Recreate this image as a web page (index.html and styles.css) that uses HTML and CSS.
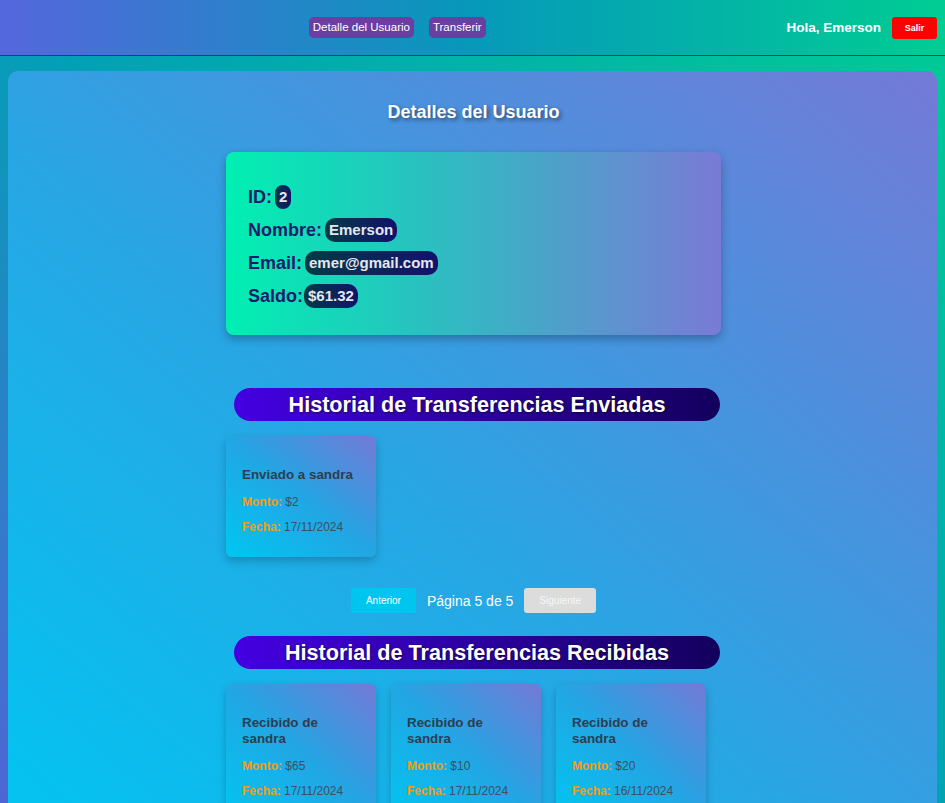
FILE: index.html
```html
<!DOCTYPE html>
<html lang="es">
<head>
<meta charset="utf-8">
<title>Detalles del Usuario</title>
<link rel="stylesheet" href="styles.css">
</head>
<body>
<header class="topbar">
  <div class="brand"></div>
  <nav class="nav">
    <a class="nav-link" href="#">Detalle del Usuario</a>
    <a class="nav-link" href="#">Transferir</a>
  </nav>
  <div class="user">
    <span class="greeting">Hola, Emerson</span>
    <button class="logout">Salir</button>
  </div>
</header>

<main class="panel">
  <h2 class="page-title">Detalles del Usuario</h2>
  <section class="content">
    <div class="user-card">
      <p class="row"><strong class="label">ID:</strong><span class="pill">2</span></p>
      <p class="row"><strong class="label">Nombre:</strong><span class="pill">Emerson</span></p>
      <p class="row"><strong class="label">Email:</strong><span class="pill">emer@gmail.com</span></p>
      <p class="row"><strong class="label tight">Saldo:</strong><span class="pill">$61.32</span></p>
    </div>

    <h2 class="section-title first">Historial de Transferencias Enviadas</h2>
    <div class="grid">
      <div class="tcard">
        <h3 class="tcard-title">Enviado a sandra</h3>
        <p class="tline"><strong class="key">Monto:</strong> $2</p>
        <p class="tline"><strong class="key">Fecha:</strong> 17/11/2024</p>
      </div>
    </div>

    <div class="pager">
      <button class="pbtn active">Anterior</button>
      <span class="pinfo">Página 5 de 5</span>
      <button class="pbtn disabled">Siguiente</button>
    </div>

    <h2 class="section-title">Historial de Transferencias Recibidas</h2>
    <div class="grid">
      <div class="tcard">
        <h3 class="tcard-title">Recibido de sandra</h3>
        <p class="tline"><strong class="key">Monto:</strong> $65</p>
        <p class="tline"><strong class="key">Fecha:</strong> 17/11/2024</p>
      </div>
      <div class="tcard">
        <h3 class="tcard-title">Recibido de sandra</h3>
        <p class="tline"><strong class="key">Monto:</strong> $10</p>
        <p class="tline"><strong class="key">Fecha:</strong> 17/11/2024</p>
      </div>
      <div class="tcard">
        <h3 class="tcard-title">Recibido de sandra</h3>
        <p class="tline"><strong class="key">Monto:</strong> $20</p>
        <p class="tline"><strong class="key">Fecha:</strong> 16/11/2024</p>
      </div>
    </div>
  </section>
</main>
</body>
</html>
```

FILE: styles.css
```css
* { box-sizing: border-box; }

html, body { margin: 0; padding: 0; }

body {
  font-family: "Liberation Sans", Arial, Helvetica, sans-serif;
  background: linear-gradient(to top right, #5660d8 0%, #02a0b6 50%, #00cc94 100%);
  min-height: 100vh;
  padding-bottom: 20px;
}

/* Header */
.topbar {
  height: 56px;
  padding: 0 8px;
  display: flex;
  align-items: center;
  justify-content: space-between;
  background: linear-gradient(to right, #5567dd 0%, #0699ba 50%, #00cd93 100%);
  border-bottom: 1px solid #24434e;
}

.brand { width: 0; }

.nav {
  display: flex;
  gap: 15px;
}

.nav-link {
  display: block;
  height: 21px;
  line-height: 21px;
  padding: 0 4px;
  background: #6a3fa2;
  color: #fff;
  border-radius: 5px;
  font-size: 11.5px;
  text-decoration: none;
}

.user {
  display: flex;
  align-items: center;
  gap: 11px;
}

.greeting {
  color: #fff;
  font-weight: bold;
  font-size: 13.5px;
}

.logout {
  width: 45px;
  height: 22px;
  border: none;
  border-radius: 3px;
  background: #ff0000;
  color: #fff;
  font-family: inherit;
  font-weight: bold;
  font-size: 9px;
  padding: 0;
}

/* Panel */
.panel {
  margin: 15px 8px 0;
  padding: 30px 0 40px 2px;
  border-radius: 10px;
  background: linear-gradient(to top right, #00c6f2 0%, #28a6e4 45%, #7479d6 100%);
}

.page-title {
  margin: 0;
  text-align: center;
  color: #fff;
  font-size: 18px;
  line-height: 22px;
  text-shadow: 2px 2px 4px rgba(0, 0, 0, 0.5);
}

.content {
  width: 495px;
  margin: 29px auto 0;
}

.user-card {
  height: 183px;
  padding: 33px 22px 0;
  display: flex;
  flex-direction: column;
  gap: 9px;
  border-radius: 8px;
  background: linear-gradient(to right, #00f0b2 0%, #2ac0c0 40%, #7a7ad6 100%);
  box-shadow: 0 4px 10px rgba(0, 0, 0, 0.28);
}

.row {
  margin: 0;
  height: 24px;
  display: flex;
  align-items: center;
}

.label {
  color: #1b1a6c;
  font-size: 18px;
  margin-right: 3px;
}

.label.tight { margin-right: 1px; }

.pill {
  height: 24px;
  line-height: 24px;
  padding: 0 4px;
  border-radius: 10px;
  background: linear-gradient(to right, #033a46, #12126c);
  color: #e6e6ee;
  font-weight: bold;
  font-size: 15px;
}

.section-title {
  margin: 53px 1px 0 8px;
  height: 33px;
  line-height: 33px;
  border-radius: 17px;
  background: linear-gradient(to right, #4400e2 0%, #2a0099 55%, #13005c 100%);
  color: #fff;
  text-align: center;
  font-size: 21.6px;
  text-shadow: 1px 1px 3px rgba(0, 0, 0, 0.5);
}

.section-title:not(.first) { margin-top: 23px; }

.grid {
  margin-top: 15px;
  display: grid;
  grid-template-columns: repeat(3, 150px);
  gap: 15px;
}

.tcard {
  padding: 31px 16px 23px;
  border-radius: 6px;
  background: linear-gradient(to top right, #00c6f0 0%, #22a6e4 50%, #7479d6 100%);
  box-shadow: 0 4px 8px rgba(0, 0, 0, 0.22);
}

.tcard-title {
  margin: 0 0 12px;
  font-size: 13.4px;
  line-height: 16px;
  color: #2c3e50;
}

.tline {
  margin: 0 0 11px;
  font-size: 12px;
  line-height: 14px;
  color: #3d4f62;
}

.tline:last-child { margin-bottom: 0; }

.key { color: #f39c12; }

.pager {
  margin-top: 31px;
  display: flex;
  justify-content: center;
  align-items: center;
  gap: 11px;
}

.pbtn {
  height: 25px;
  padding: 0 15px;
  border: none;
  border-radius: 3px;
  font-family: inherit;
  font-size: 10px;
  color: #fff;
}

.pbtn.active { background: #00c6ef; }
.pbtn.disabled { background: #dcdcdc; color: #f7f7f7; }

.pinfo {
  color: #fff;
  font-size: 14px;
}
```
